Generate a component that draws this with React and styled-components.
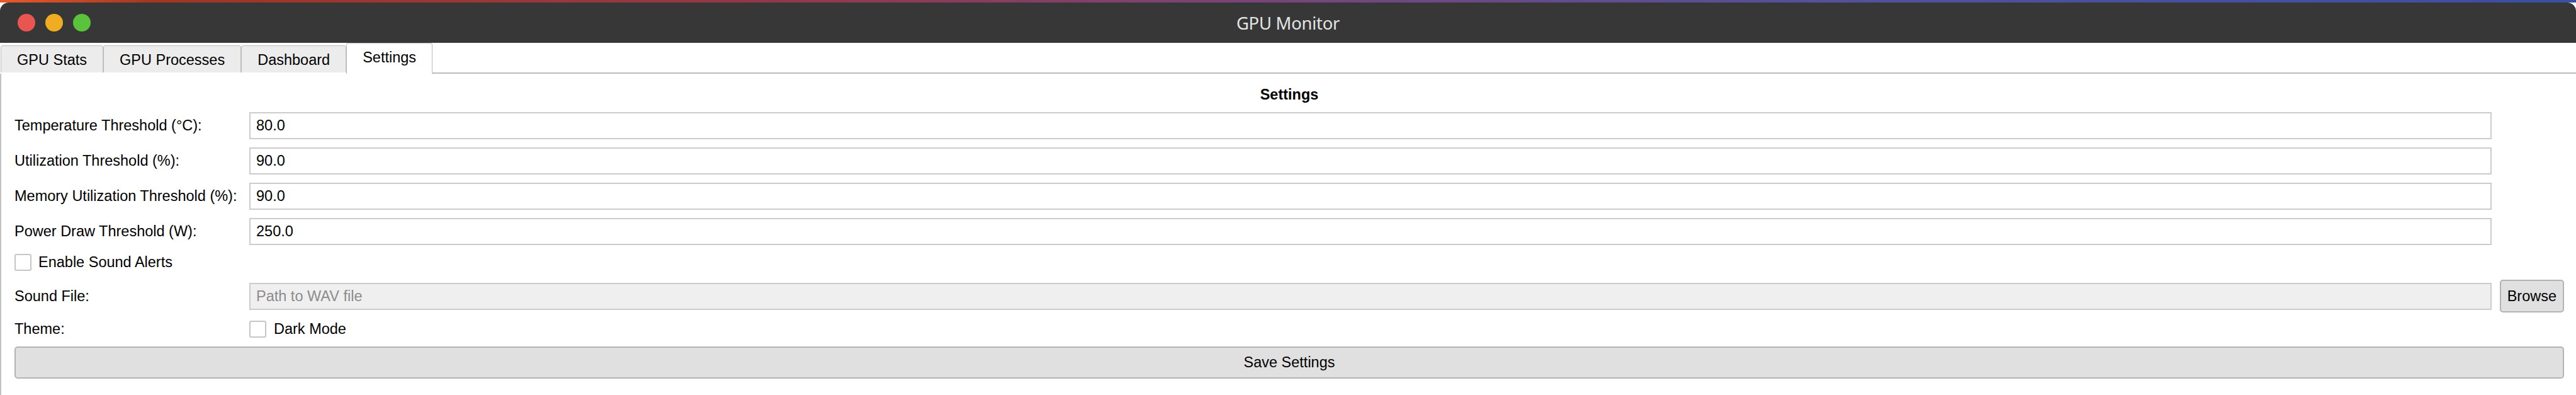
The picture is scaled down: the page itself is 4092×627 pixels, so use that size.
import React from "react";
import styled, { createGlobalStyle } from "styled-components";

const GlobalStyle = createGlobalStyle`
  html, body {
    margin: 0;
    padding: 0;
    background: #ffffff;
  }

  body {
    font-family: "Liberation Sans", Arial, sans-serif;
    color: #000;
  }
`;

const Frame = styled.div`
  display: flex;
  flex-direction: column;
  height: 627px;
  overflow: hidden;
  background: #ffffff;
`;

const Stripe = styled.div`
  height: 4px;
  flex: none;
  background: linear-gradient(
    90deg,
    #e85a2a 0%,
    #a13622 6%,
    #93384a 30%,
    #7a4478 48%,
    #54519a 70%,
    #3b4fa3 100%
  );
`;

const TitleBar = styled.header`
  flex: none;
  height: 64px;
  display: grid;
  grid-template-columns: 1fr auto 1fr;
  align-items: center;
  background: #373737;
  border-radius: 14px 14px 0 0;
`;

const Lights = styled.div`
  display: flex;
  gap: 16px;
  padding-left: 28px;
`;

const Light = styled.span`
  width: 28px;
  height: 28px;
  border-radius: 50%;
  background: ${props => props.color};
`;

const Title = styled.h1`
  margin: 0;
  font-family: "Noto Sans", "Open Sans", sans-serif;
  font-weight: 400;
  font-size: 27.5px;
  letter-spacing: -0.3px;
  color: #e4e4e4;
`;

const TabBar = styled.nav`
  flex: none;
  height: 49px;
  display: flex;
  align-items: flex-end;
  padding-left: 1px;
`;

const Tab = styled.div`
  box-sizing: border-box;
  display: flex;
  align-items: center;
  justify-content: center;
  padding: ${props => (props.active ? "0 25px 4px" : "2px 25px 0")};
  height: ${props => (props.active ? "49px" : "43px")};
  margin-bottom: ${props => (props.active ? "0" : "2px")};
  background: ${props => (props.active ? "#ffffff" : "#ececec")};
  border: 1px solid #bdbdbd;
  border-bottom: none;
  border-radius: 4px 4px 0 0;
  font-size: 23.5px;
  white-space: nowrap;
`;

const TabFiller = styled.div`
  flex: 1;
  border-bottom: 2px solid #bcbcbc;
`;

const Pane = styled.main`
  flex: 1;
  border-left: 2px solid #c2c2c2;
  padding: 20px 19px 0 21px;
`;

const Form = styled.div`
  display: grid;
  grid-template-columns: minmax(360px, auto) 1fr auto;
  column-gap: 13px;
  row-gap: 13px;
  align-items: center;
  font-size: 23.5px;
`;

const Heading = styled.h2`
  grid-column: 1 / -1;
  margin: 0 0 1px;
  text-align: center;
  font-size: 23.5px;
  line-height: 27px;
  font-weight: 700;
`;

const Label = styled.label`
  grid-column: 1;
  white-space: nowrap;
  line-height: 27px;
`;

const Field = styled.input`
  grid-column: 2;
  box-sizing: border-box;
  width: 100%;
  height: 43px;
  margin: 0;
  padding: 0 9px;
  border: 2px solid #cccccc;
  border-radius: 0;
  background: ${props => (props.disabled ? "#efefef" : "#ffffff")};
  font-family: "Liberation Sans", Arial, sans-serif;
  font-size: 23.5px;
  color: #000;
  outline: none;

  &::placeholder {
    color: #8c8c8c;
    opacity: 1;
  }
`;

const CheckRow = styled.label`
  grid-column: ${props => props.column};
  display: flex;
  align-items: center;
  gap: ${props => props.gap}px;
  height: ${props => props.height}px;
  white-space: nowrap;
`;

const Box = styled.input`
  appearance: none;
  box-sizing: border-box;
  width: 27px;
  height: 27px;
  margin: 0;
  border: 2px solid #c6c6c6;
  border-radius: 3px;
  background: #ffffff;
`;

const Button = styled.button`
  box-sizing: border-box;
  height: ${props => props.height}px;
  padding: 0 10px;
  border: 2px solid #b3b3b3;
  border-radius: 5px;
  background: #e0e0e0;
  font-family: "Liberation Sans", Arial, sans-serif;
  font-size: 23.5px;
  color: #000;
`;

const WideButton = styled(Button)`
  grid-column: 1 / -1;
  width: 100%;
  margin-top: 1px;
`;

const tabs = ["GPU Stats", "GPU Processes", "Dashboard", "Settings"];

const thresholds = [
  { label: "Temperature Threshold (°C):", value: "80.0" },
  { label: "Utilization Threshold (%):", value: "90.0" },
  { label: "Memory Utilization Threshold (%):", value: "90.0" },
  { label: "Power Draw Threshold (W):", value: "250.0" }
];

const App = () => (
  <Frame>
    <GlobalStyle />
    <Stripe />
    <TitleBar>
      <Lights>
        <Light color="#e9554f" />
        <Light color="#f0ad22" />
        <Light color="#59c43b" />
      </Lights>
      <Title>GPU Monitor</Title>
      <div />
    </TitleBar>
    <TabBar>
      {tabs.map(tab => (
        <Tab key={tab} active={tab === "Settings"}>
          {tab}
        </Tab>
      ))}
      <TabFiller />
    </TabBar>
    <Pane>
      <Form>
        <Heading>Settings</Heading>
        {thresholds.map(item => (
          <React.Fragment key={item.label}>
            <Label>{item.label}</Label>
            <Field type="text" value={item.value} readOnly />
          </React.Fragment>
        ))}
        <CheckRow column="1 / 3" gap={11} height={29}>
          <Box type="checkbox" />
          Enable Sound Alerts
        </CheckRow>
        <Label>Sound File:</Label>
        <Field type="text" placeholder="Path to WAV file" disabled />
        <Button height={52}>Browse</Button>
        <Label>Theme:</Label>
        <CheckRow column="2" gap={12} height={27}>
          <Box type="checkbox" />
          Dark Mode
        </CheckRow>
        <WideButton height={51}>Save Settings</WideButton>
      </Form>
    </Pane>
  </Frame>
);

export default App;
